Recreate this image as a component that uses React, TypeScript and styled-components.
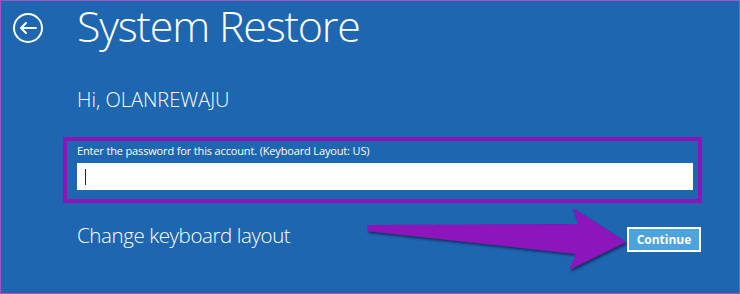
import React from "react";
import styled, { createGlobalStyle } from "styled-components";

const GlobalStyle = createGlobalStyle`
  html, body {
    margin: 0;
    padding: 0;
    background: #1e66b0;
  }
  * {
    box-sizing: border-box;
  }
`;

const Frame = styled.div`
  position: relative;
  width: 740px;
  height: 294px;
  border: 1px solid #a752c2;
  background: #1e66b0;
  color: #fff;
  font-family: "Open Sans", "Noto Sans", sans-serif;
  display: flex;
  flex-direction: column;
  overflow: hidden;
`;

const Header = styled.div`
  display: flex;
  align-items: flex-start;
  height: 50px;
`;

const BackButton = styled.button`
  width: 30px;
  height: 30px;
  margin: 12px 0 0 12px;
  padding: 0;
  border: none;
  background: transparent;
  display: flex;
`;

const Title = styled.h1`
  margin: -4px 0 0 34px;
  font-size: 43px;
  line-height: 58px;
  font-weight: 300;
  letter-spacing: -1.2px;
  white-space: nowrap;
`;

const Greeting = styled.div`
  margin: 37px 0 0 76px;
  font-size: 20px;
  line-height: 24px;
  font-weight: 300;
`;

const PasswordBox = styled.div`
  margin: 25px 0 0 62px;
  width: 639px;
  height: 66px;
  border: 4px solid #8c14b9;
  padding: 3px 5px 0 10px;
  display: flex;
  flex-direction: column;
`;

const FieldLabel = styled.label`
  font-size: 11px;
  line-height: 14px;
  font-weight: 400;
  letter-spacing: -0.15px;
`;

const PasswordInput = styled.div`
  margin-top: 5px;
  height: 27px;
  background: #fff;
  display: flex;
  align-items: center;
  padding-left: 8px;
`;

const Caret = styled.span`
  width: 1px;
  height: 16px;
  background: #1a2540;
`;

const Footer = styled.div`
  margin: 19px 38px 0 76px;
  display: flex;
  align-items: flex-start;
  justify-content: space-between;
`;

const LinkText = styled.span`
  font-size: 20.5px;
  line-height: 26px;
  font-weight: 300;
  letter-spacing: -0.4px;
`;

const ContinueButton = styled.button`
  margin-top: 5px;
  width: 74px;
  height: 25px;
  border: 2px solid #fff;
  background: #4da3dc;
  color: #fff;
  font-family: "Open Sans", "Noto Sans", sans-serif;
  font-size: 12px;
  font-weight: 700;
  padding: 0;
  line-height: 1;
`;

const ArrowOverlay = styled.svg`
  position: absolute;
  left: 359px;
  top: 199px;
  width: 272px;
  height: 78px;
  overflow: visible;
`;

const BackIcon = () => (
  <svg width="30" height="30" viewBox="0 0 30 30" fill="none">
    <circle cx="15" cy="15" r="14" stroke="#fff" strokeWidth="2" />
    <path
      d="M8 15H23M13 10L8 15L13 20"
      stroke="#fff"
      strokeWidth="2"
      strokeLinecap="round"
      strokeLinejoin="round"
    />
  </svg>
);

const App = () => {
  return (
    <Frame>
      <GlobalStyle />
      <Header>
        <BackButton aria-label="Back">
          <BackIcon />
        </BackButton>
        <Title>System Restore</Title>
      </Header>
      <Greeting>Hi, OLANREWAJU</Greeting>
      <PasswordBox>
        <FieldLabel>Enter the password for this account. (Keyboard Layout: US)</FieldLabel>
        <PasswordInput>
          <Caret />
        </PasswordInput>
      </PasswordBox>
      <Footer>
        <LinkText>Change keyboard layout</LinkText>
        <ContinueButton>Continue</ContinueButton>
      </Footer>
      <ArrowOverlay viewBox="0 0 272 78">
        <defs>
          <filter id="arrowShadow" x="-10%" y="-20%" width="130%" height="150%">
            <feDropShadow dx="1.5" dy="2" stdDeviation="1" floodColor="#0a2350" floodOpacity="0.8" />
          </filter>
        </defs>
        <polygon
          points="7,25 218,24 213,8 266,42 209,70 216,54 7,31"
          fill="#8c12bb"
          filter="url(#arrowShadow)"
        />
      </ArrowOverlay>
    </Frame>
  );
};

export default App;
